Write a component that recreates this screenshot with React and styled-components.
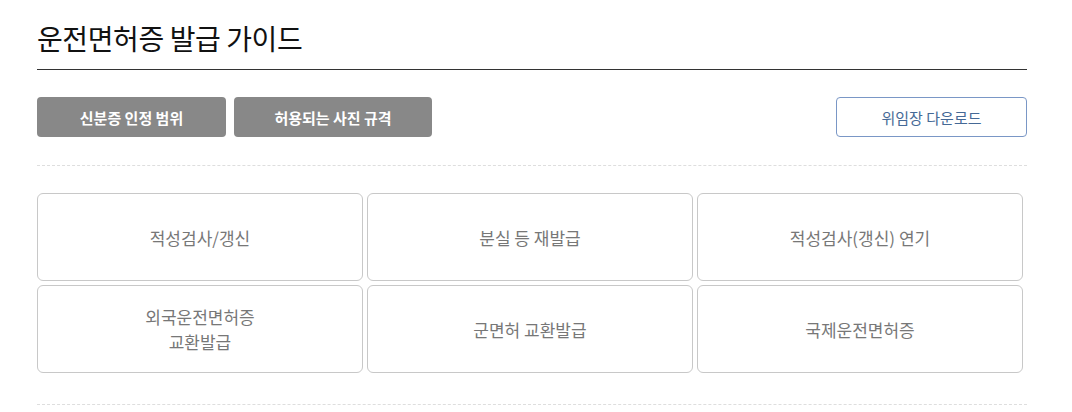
import React from "react";
import styled, { createGlobalStyle } from "styled-components";

const Global = createGlobalStyle`
  html, body { margin: 0; padding: 0; background: #fff; }
  body { font-family: "Noto Sans CJK KR", "Noto Sans", sans-serif; }
  * { box-sizing: border-box; }
`;

const Page = styled.div`
  width: 990px;
  margin-left: 37px;
  padding-top: 18px;
`;

const Title = styled.h2`
  margin: 0;
  font-size: 28px;
  font-weight: 400;
  line-height: 40px;
  color: #111;
  padding-bottom: 11px;
  border-bottom: 1px solid #333;
  letter-spacing: -0.4px;
`;

const Toolbar = styled.div`
  display: flex;
  align-items: center;
  gap: 8px;
  margin-top: 27px;
  padding-bottom: 28px;
  border-bottom: 1px dashed #dedede;
`;

const Button = styled.button`
  height: 40px;
  width: ${(p) => p.$w}px;
  padding: 0;
  border-radius: 4px;
  font-family: inherit;
  font-size: 15px;
  cursor: pointer;
  ${(p) =>
    p.$outline
      ? `
    margin-left: auto;
    background: #fff;
    border: 1px solid #7a97c6;
    color: #456996;
    font-weight: 400;
  `
      : `
    background: #888;
    border: none;
    color: #fff;
    font-weight: 700;
  `}
`;

const Grid = styled.div`
  display: grid;
  grid-template-columns: repeat(3, 326px);
  column-gap: 4px;
  row-gap: 4px;
  margin-top: 27px;
  padding-bottom: 31px;
  border-bottom: 1px dashed #dedede;
`;

const Card = styled.a`
  height: 88px;
  display: flex;
  align-items: center;
  justify-content: center;
  text-align: center;
  border: 1px solid #c8c8c8;
  border-radius: 6px;
  color: #777;
  font-size: 17px;
  line-height: 25px;
  text-decoration: none;
  cursor: pointer;
`;

const items = [
  ["적성검사/갱신"],
  ["분실 등 재발급"],
  ["적성검사(갱신) 연기"],
  ["외국운전면허증", "교환발급"],
  ["군면허 교환발급"],
  ["국제운전면허증"],
];

export default function App() {
  return (
    <>
      <Global />
      <Page>
        <Title>운전면허증 발급 가이드</Title>
        <Toolbar>
          <Button $w={189}>신분증 인정 범위</Button>
          <Button $w={198}>허용되는 사진 규격</Button>
          <Button $outline $w={191}>위임장 다운로드</Button>
        </Toolbar>
        <Grid>
          {items.map((lines, i) => (
            <Card key={i}>
              <span>
                {lines.map((l, j) => (
                  <React.Fragment key={j}>
                    {j > 0 && <br />}
                    {l}
                  </React.Fragment>
                ))}
              </span>
            </Card>
          ))}
        </Grid>
      </Page>
    </>
  );
}
